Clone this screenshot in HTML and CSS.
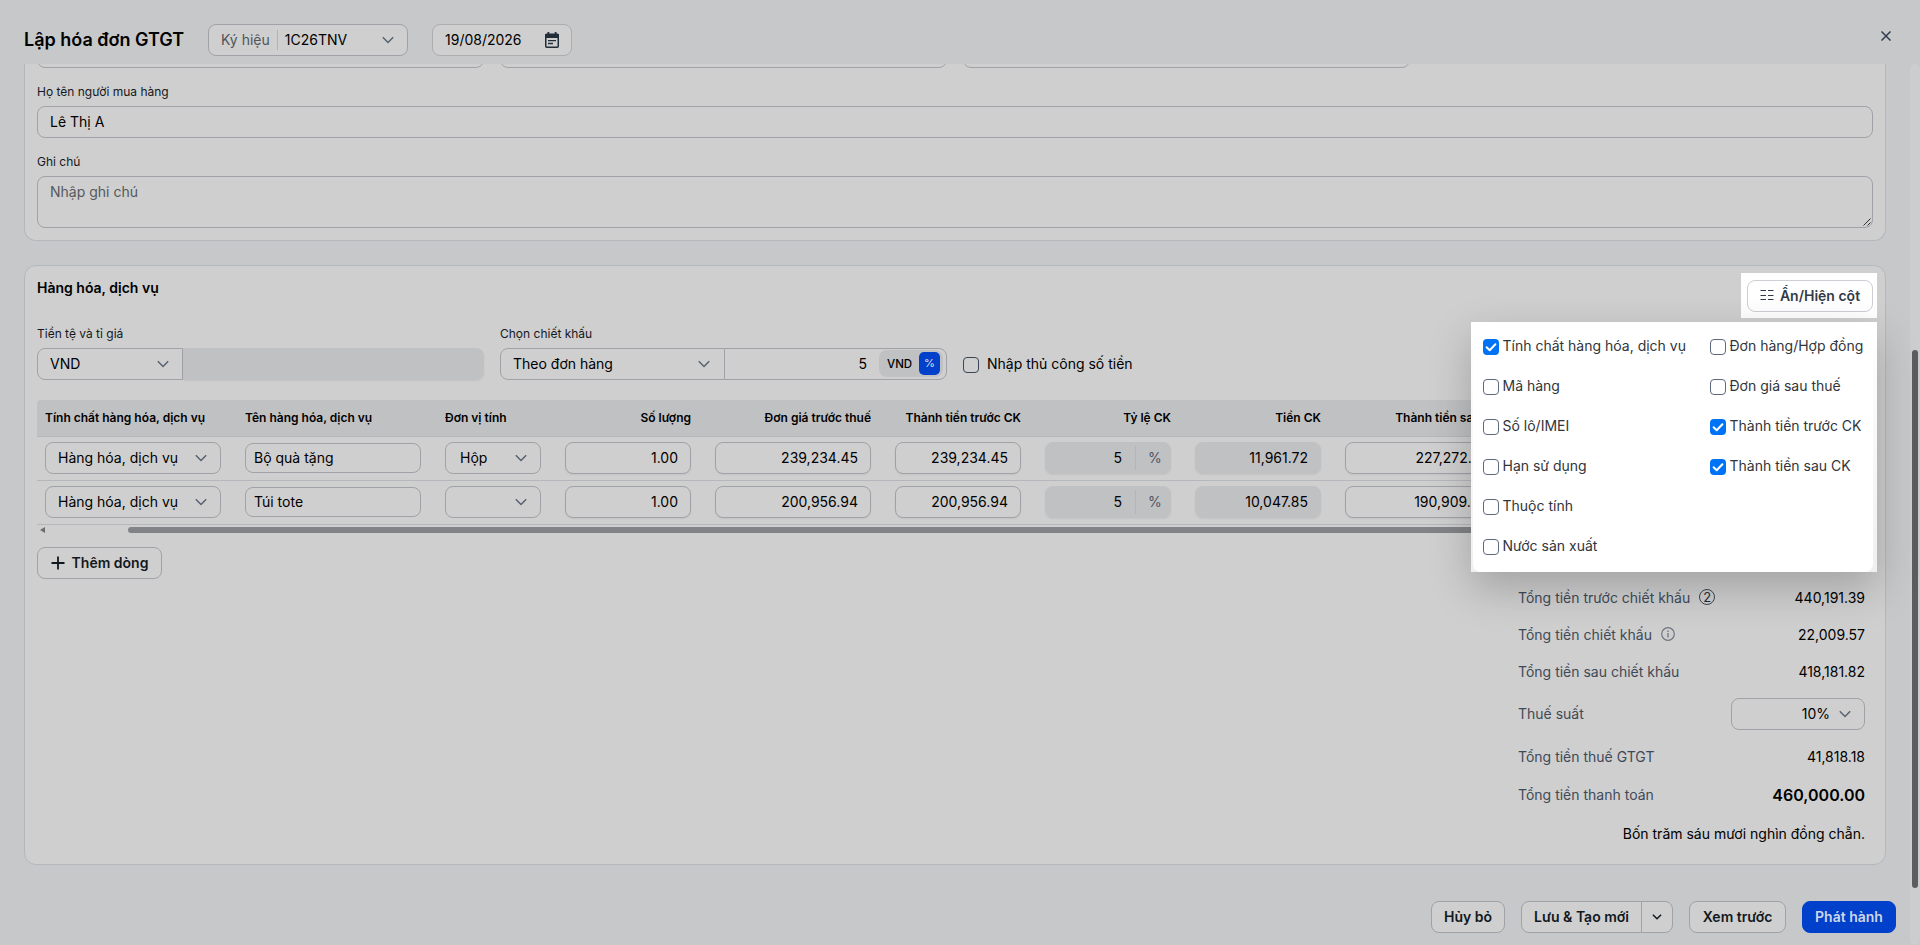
FILE: index.html
```html
<!DOCTYPE html>
<html lang="vi">
<head>
<meta charset="utf-8">
<title>Lập hóa đơn GTGT</title>
<link rel="stylesheet" href="styles.css">
</head>
<body>
<svg width="0" height="0" class="defs">
  <symbol id="chev" viewBox="0 0 12 12"><path d="M0.8 3.2 6 8.6 11.2 3.2" fill="none" stroke="currentColor" stroke-width="1.4"/></symbol>
  <symbol id="tick" viewBox="0 0 16 16"><path d="M3.6 8.2 6.7 11.2 12.4 5.2" fill="none" stroke="#fff" stroke-width="2" stroke-linecap="round" stroke-linejoin="round"/></symbol>
</svg>
<div class="app">
  <header class="top">
    <h1 class="title">Lập hóa đơn GTGT</h1>
    <div class="field symbol"><span class="muted pre">Ký hiệu</span><span class="grow">1C26TNV</span><svg class="chev"><use href="#chev"/></svg></div>
    <div class="field date"><span class="grow">19/08/2026</span>
      <svg class="cal" viewBox="0 0 16 16"><path d="M4.4 0v3M11.6 0v3" stroke="currentColor" stroke-width="1.8"/><rect x="1.75" y="2.25" width="12.5" height="13" rx="1" fill="none" stroke="currentColor" stroke-width="1.5"/><path d="M1.2 2h13.6v4H1.2z" fill="currentColor"/><path d="M4 8.6h8M4 11.5h5" stroke="currentColor" stroke-width="1.4"/></svg>
    </div>
    <svg class="close" viewBox="0 0 10 10"><path d="M0.5 0.5l9 9M9.5 0.5l-9 9" stroke="currentColor" stroke-width="1.5"/></svg>
  </header>

  <main class="body">
    <section class="card buyer">
      <div class="cols4 stub"><i class="field"></i><i class="field"></i><i class="field"></i></div>
      <label class="lbl">Họ tên người mua hàng</label>
      <div class="field">Lê Thị A</div>
      <label class="lbl">Ghi chú</label>
      <div class="field area"><span>Nhập ghi chú</span><svg class="grip" viewBox="0 0 8 8"><path d="M0.5 7.5l7-7M4.5 7.5l3-3" stroke="#222" stroke-width="0.9"/></svg></div>
    </section>

    <section class="card goods">
      <h2 class="subtitle">Hàng hóa, dịch vụ</h2>
      <div class="cols4">
        <div><label class="lbl">Tiền tệ và tỉ giá</label>
          <div class="joined"><div class="field first currency"><span class="grow">VND</span><svg class="chev"><use href="#chev"/></svg></div><div class="rate"></div></div>
        </div>
        <div><label class="lbl">Chọn chiết khấu</label>
          <div class="joined"><div class="field first discount"><span class="grow">Theo đơn hàng</span><svg class="chev"><use href="#chev"/></svg></div><div class="field last"><span class="grow five">5</span><span class="unit"><span>VND</span><b>%</b></span></div></div>
        </div>
        <div class="manual"><i class="box dim"></i><span>Nhập thủ công số tiền</span></div>
      </div>

      <div class="table">
        <div class="tr head"><span>Tính chất hàng hóa, dịch vụ</span><span>Tên hàng hóa, dịch vụ</span><span>Đơn vị tính</span><span class="r">Số lượng</span><span class="r">Đơn giá trước thuế</span><span class="r">Thành tiền trước CK</span><span class="r">Tỷ lệ CK</span><span class="r">Tiền CK</span><span class="r">Thành tiền sau CK</span></div>
        <div class="tr">
          <div class="field"><span class="grow">Hàng hóa, dịch vụ</span><svg class="chev"><use href="#chev"/></svg></div>
          <div class="field name">Bộ quà tặng</div>
          <div class="field uom"><span class="grow">Hộp</span><svg class="chev"><use href="#chev"/></svg></div>
          <div class="field num">1.00</div><div class="field num">239,234.45</div><div class="field num">239,234.45</div>
          <div class="field off"><span class="grow r">5</span><span class="pct">%</span></div>
          <div class="field off num">11,961.72</div><div class="field num">227,272.73</div>
        </div>
        <div class="tr">
          <div class="field"><span class="grow">Hàng hóa, dịch vụ</span><svg class="chev"><use href="#chev"/></svg></div>
          <div class="field name">Túi tote</div>
          <div class="field uom"><span class="grow"></span><svg class="chev"><use href="#chev"/></svg></div>
          <div class="field num">1.00</div><div class="field num">200,956.94</div><div class="field num">200,956.94</div>
          <div class="field off"><span class="grow r">5</span><span class="pct">%</span></div>
          <div class="field off num">10,047.85</div><div class="field num">190,909.09</div>
        </div>
        <div class="hbar"><svg viewBox="0 0 5 6"><path d="M5 0v6L0 3z" fill="currentColor"/></svg><i></i></div>
      </div>

      <button class="btn add"><svg viewBox="0 0 14 14"><path d="M7 .5v13M.5 7h13" stroke="currentColor" stroke-width="1.8"/></svg>Thêm dòng</button>

      <div class="totals">
        <div class="line"><span>Tổng tiền trước chiết khấu</span><em class="two">2</em><b class="v">440,191.39</b></div>
        <div class="line"><span>Tổng tiền chiết khấu</span><svg class="info" viewBox="0 0 14 14"><circle cx="7" cy="7" r="6.3" fill="none" stroke="currentColor" stroke-width="1.2"/><path d="M7 6v4.4M7 3.5v1.4" stroke="currentColor" stroke-width="1.3"/></svg><b class="v">22,009.57</b></div>
        <div class="line"><span>Tổng tiền sau chiết khấu</span><b class="v">418,181.82</b></div>
        <div class="line tax"><span>Thuế suất</span><div class="field"><span class="grow r">10%</span><svg class="chev"><use href="#chev"/></svg></div></div>
        <div class="line"><span>Tổng tiền thuế GTGT</span><b class="v">41,818.18</b></div>
        <div class="line sum"><span>Tổng tiền thanh toán</span><b class="v big">460,000.00</b></div>
        <div class="line words"><b class="v">Bốn trăm sáu mươi nghìn đồng chẵn.</b></div>
      </div>
    </section>
  </main>

  <footer class="foot">
    <button class="btn cancel">Hủy bỏ</button>
    <div class="split"><button class="btn save">Lưu &amp; Tạo mới</button><button class="btn more"><svg viewBox="0 0 10 6"><path d="M0.9 0.8 5 4.8 9.1 0.8" fill="none" stroke="currentColor" stroke-width="1.5"/></svg></button></div>
    <button class="btn preview">Xem trước</button>
    <button class="btn primary">Phát hành</button>
  </footer>

  <div class="vtrack"><i></i></div>
  <div class="spot"><button class="btn cols"><svg viewBox="0 0 14 12"><path d="M0.5 1.5h5.5M8 1.5h5.5M0.5 6.5h5.5M8 6.5h5.5M0.5 10.5h5.5M8 10.5h5.5" stroke="currentColor" stroke-width="1"/></svg>Ẩn/Hiện cột</button></div>
  <div class="pop">
    <div class="panel">
      <div class="opt"><i class="box on"><svg><use href="#tick"/></svg></i><span>Tính chất hàng hóa, dịch vụ</span></div>
      <div class="opt"><i class="box"></i><span>Đơn hàng/Hợp đồng</span></div>
      <div class="opt"><i class="box"></i><span>Mã hàng</span></div>
      <div class="opt"><i class="box"></i><span>Đơn giá sau thuế</span></div>
      <div class="opt"><i class="box"></i><span>Số lô/IMEI</span></div>
      <div class="opt"><i class="box on"><svg><use href="#tick"/></svg></i><span>Thành tiền trước CK</span></div>
      <div class="opt"><i class="box"></i><span>Hạn sử dụng</span></div>
      <div class="opt"><i class="box on"><svg><use href="#tick"/></svg></i><span>Thành tiền sau CK</span></div>
      <div class="opt solo"><i class="box"></i><span>Thuộc tính</span></div>
      <div class="opt solo"><i class="box"></i><span>Nước sản xuất</span></div>
    </div>
  </div>
</div>
</body>
</html>
```
FILE: styles.css
```css
* { box-sizing: border-box; }
body { margin: 0; background: #c7c8ca; color: #000; font: 14px/20px Inter, sans-serif; overflow: hidden; }
.defs { position: absolute; }
.app { position: relative; width: 1920px; height: 945px; display: flex; flex-direction: column; overflow: hidden; }
svg { flex: none; display: block; }
i, em { font-style: normal; display: block; }

.top { flex: none; height: 64px; padding: 16px 29px 0 24px; display: flex; align-items: center; gap: 24px; }
.title { margin: 0; width: 160px; font-size: 18px; line-height: 24px; font-weight: 600; white-space: nowrap; }
.field { height: 32px; border: 1px solid #a0a2a8; border-radius: 8px; background: #cfcfcf; padding: 0 12px; display: flex; align-items: center; white-space: nowrap; min-width: 0; }
.grow { flex: 1; min-width: 0; }
.r { text-align: right; }
.muted { color: #50555c; }
.symbol { width: 200px; }
.pre { border-right: 1px solid #b0b2b6; padding-right: 7px; margin-right: 7px; }
.chev { width: 12px; height: 12px; color: #55606f; margin-right: 1px; }
.date { width: 140px; padding-right: 11px; border-color: #abadb0; }
.cal { width: 16px; height: 16px; color: #222d3a; }
.close { width: 10px; height: 10px; color: #2f3d4f; margin: -8px 0 0 auto; }

.body { height: 817px; overflow: hidden; padding: 0 34px 0 24px; display: flex; flex-direction: column; gap: 24px; }
.card { border: 1px solid #b4b7bc; border-radius: 12px; background: #cfcfcf; padding: 0 12px; flex: none; }
.buyer { height: 177px; border-top: 0; border-radius: 0 0 12px 12px; }
.cols4 { display: grid; grid-template-columns: repeat(4, 1fr); gap: 16px; }
.stub { height: 4px; overflow: hidden; align-content: end; }
.lbl { display: block; font-size: 12px; line-height: 16px; color: #15181c; }
.buyer .lbl { padding: 16px 0 6px; }
.buyer .area { height: 52px; align-items: flex-start; padding-top: 5px; color: #55585c; position: relative; }
.grip { position: absolute; width: 8px; height: 8px; right: 1px; bottom: 1px; }

.goods { height: 600px; padding-top: 12px; }
.subtitle { margin: 0 0 28px; font-size: 14px; line-height: 20px; font-weight: 600; }
.goods .lbl { margin-bottom: 6px; }
.joined { display: flex; }
.first { border-radius: 8px 0 0 8px; }
.last { border-radius: 0 8px 8px 0; flex: 1; padding: 0 3px; margin-left: -1px; }
.currency { width: 146px; padding-right: 12px; }
.discount { width: 225px; padding-right: 13px; }
.rate { flex: 1; background: #c0c1c3; border-radius: 0 8px 8px 0; box-shadow: 0 1px 2px rgba(0,0,0,.06); }
.five { text-align: right; padding-right: 12px; }
.unit { height: 27px; width: 64px; margin-bottom: 1px; border-radius: 8px; background: #c0c1c3; display: flex; align-items: center; justify-content: space-between; padding: 0 3px 0 8px; font-size: 11.5px; font-weight: 500; }
.unit b { width: 21px; height: 23px; border-radius: 5px; background: #0040cb; color: #cfd6e6; font-weight: 500; font-size: 11px; text-align: center; line-height: 23px; }
.manual { display: flex; align-items: center; gap: 8px; padding-top: 24px; }
.manual span { padding-bottom: 2px; }
.box { width: 16px; height: 16px; border: 1px solid #5d6a7c; border-radius: 4px; flex: none; }
.box.dim { border-color: #3a4658; }
.box.on { background: #0072f5; border: 0; }
.box svg { width: 16px; height: 16px; }

.table { margin-top: 20px; overflow: hidden; }
.tr { display: grid; grid-template-columns: 176px 176px 96px 126px 156px 126px 126px 126px 156px; gap: 24px; height: 44px; padding: 0 8px 1px; align-items: center; border-bottom: 1px solid #b4b7bc; }
.tr .field { padding-left: 12px; }
.tr .name { height: 30px; padding-left: 8px; }
.tr .uom { padding-left: 14px; }
.head { height: 37px; padding-bottom: 0; background: #c0c1c3; font-size: 12px; font-weight: 600; white-space: nowrap; border-radius: 4px 4px 0 0; }
.num { justify-content: flex-end; }
.field.off { background: #c0c1c3; border-color: #c0c1c3; }
.num, .off { box-shadow: 0 1px 2px rgba(0,0,0,.06); }
.pct { border-left: 1px solid #b4b6b9; margin-left: 13px; padding: 2px 0 2px 12px; color: #4b5563; width: 23px; }
.hbar { display: flex; align-items: center; height: 6px; margin-top: 2px; padding-left: 3px; color: #6b6d70; }
.hbar svg { width: 5px; height: 6px; margin-right: 83px; }
.hbar i { flex: 1; height: 6px; background: #828386; border-radius: 3px; }

.btn { height: 32px; border: 1px solid #a0a2a8; border-radius: 8px; background: #cfcfcf; color: #111820; font: 600 14px/20px Inter, sans-serif; display: flex; align-items: center; justify-content: center; padding: 0; white-space: nowrap; }
.add { margin-top: 14px; width: 125px; gap: 7px; }
.add svg { width: 14px; height: 14px; }

.totals { width: 347px; margin: 0 8px 0 auto; color: #3f4a58; }
.line { display: flex; align-items: center; height: 37px; }
.v { margin-left: auto; color: #000; font-weight: 400; }
.v.big { font-size: 16px; font-weight: 600; }
.two { width: 16px; height: 16px; border: 1px solid #3c4654; border-radius: 50%; font-size: 13px; line-height: 14px; text-align: center; margin: 0 0 2px 9px; color: #222b36; }
.info { width: 14px; height: 14px; margin: 0 0 1px 9px; color: #6e7681; }
.tax { height: 48px; }
.tax .field { margin-left: auto; width: 134px; color: #000; }
.tax .chev { margin-left: 9px; }
.sum { height: 39px; }
.words { height: 39px; }

.foot { height: 64px; padding: 20px 24px 12px; display: flex; justify-content: flex-end; gap: 16px; }
.cancel { width: 74px; }
.split { display: flex; }
.save { width: 121px; border-radius: 8px 0 0 8px; }
.more { width: 32px; border-radius: 0 8px 8px 0; margin-left: -1px; }
.more svg { width: 10px; height: 6px; }
.preview { width: 97px; }
.primary { width: 94px; background: #0040cb; border-color: #0040cb; color: #cfd6e6; }

.vtrack { position: absolute; left: 1910px; top: 64px; width: 10px; height: 881px; background: #cdcdcd; border-radius: 5px; padding: 286px 2px 0; }
.vtrack i { height: 538px; border-radius: 3px; background: #5d5d5d; }

.spot { position: absolute; left: 1741px; top: 273px; width: 136px; height: 45px; background: #fff; padding: 7px 4px 0 6px; }
.cols { background: #fff; border-color: #cdcfd5; color: #333b46; width: 126px; gap: 6px; }
.cols svg { width: 14px; height: 12px; margin-bottom: 2px; }
.pop { position: absolute; left: 1471px; top: 322px; width: 406px; height: 250px; background: linear-gradient(#fff, #f0f0f0); padding: 0 4px 0 2px; box-shadow: 0 16px 40px rgba(0,0,0,.22); }
.panel { height: 250px; background: #fff; border-radius: 0 0 8px 8px; padding: 5px 0 0 10px; display: grid; grid-template-columns: 227px 1fr; grid-auto-rows: 40px; }
.opt { display: flex; align-items: center; gap: 3.5px; color: #31353a; white-space: nowrap; }
.opt span { padding-bottom: 2px; }
.solo { grid-column: 1 / 3; }
```
